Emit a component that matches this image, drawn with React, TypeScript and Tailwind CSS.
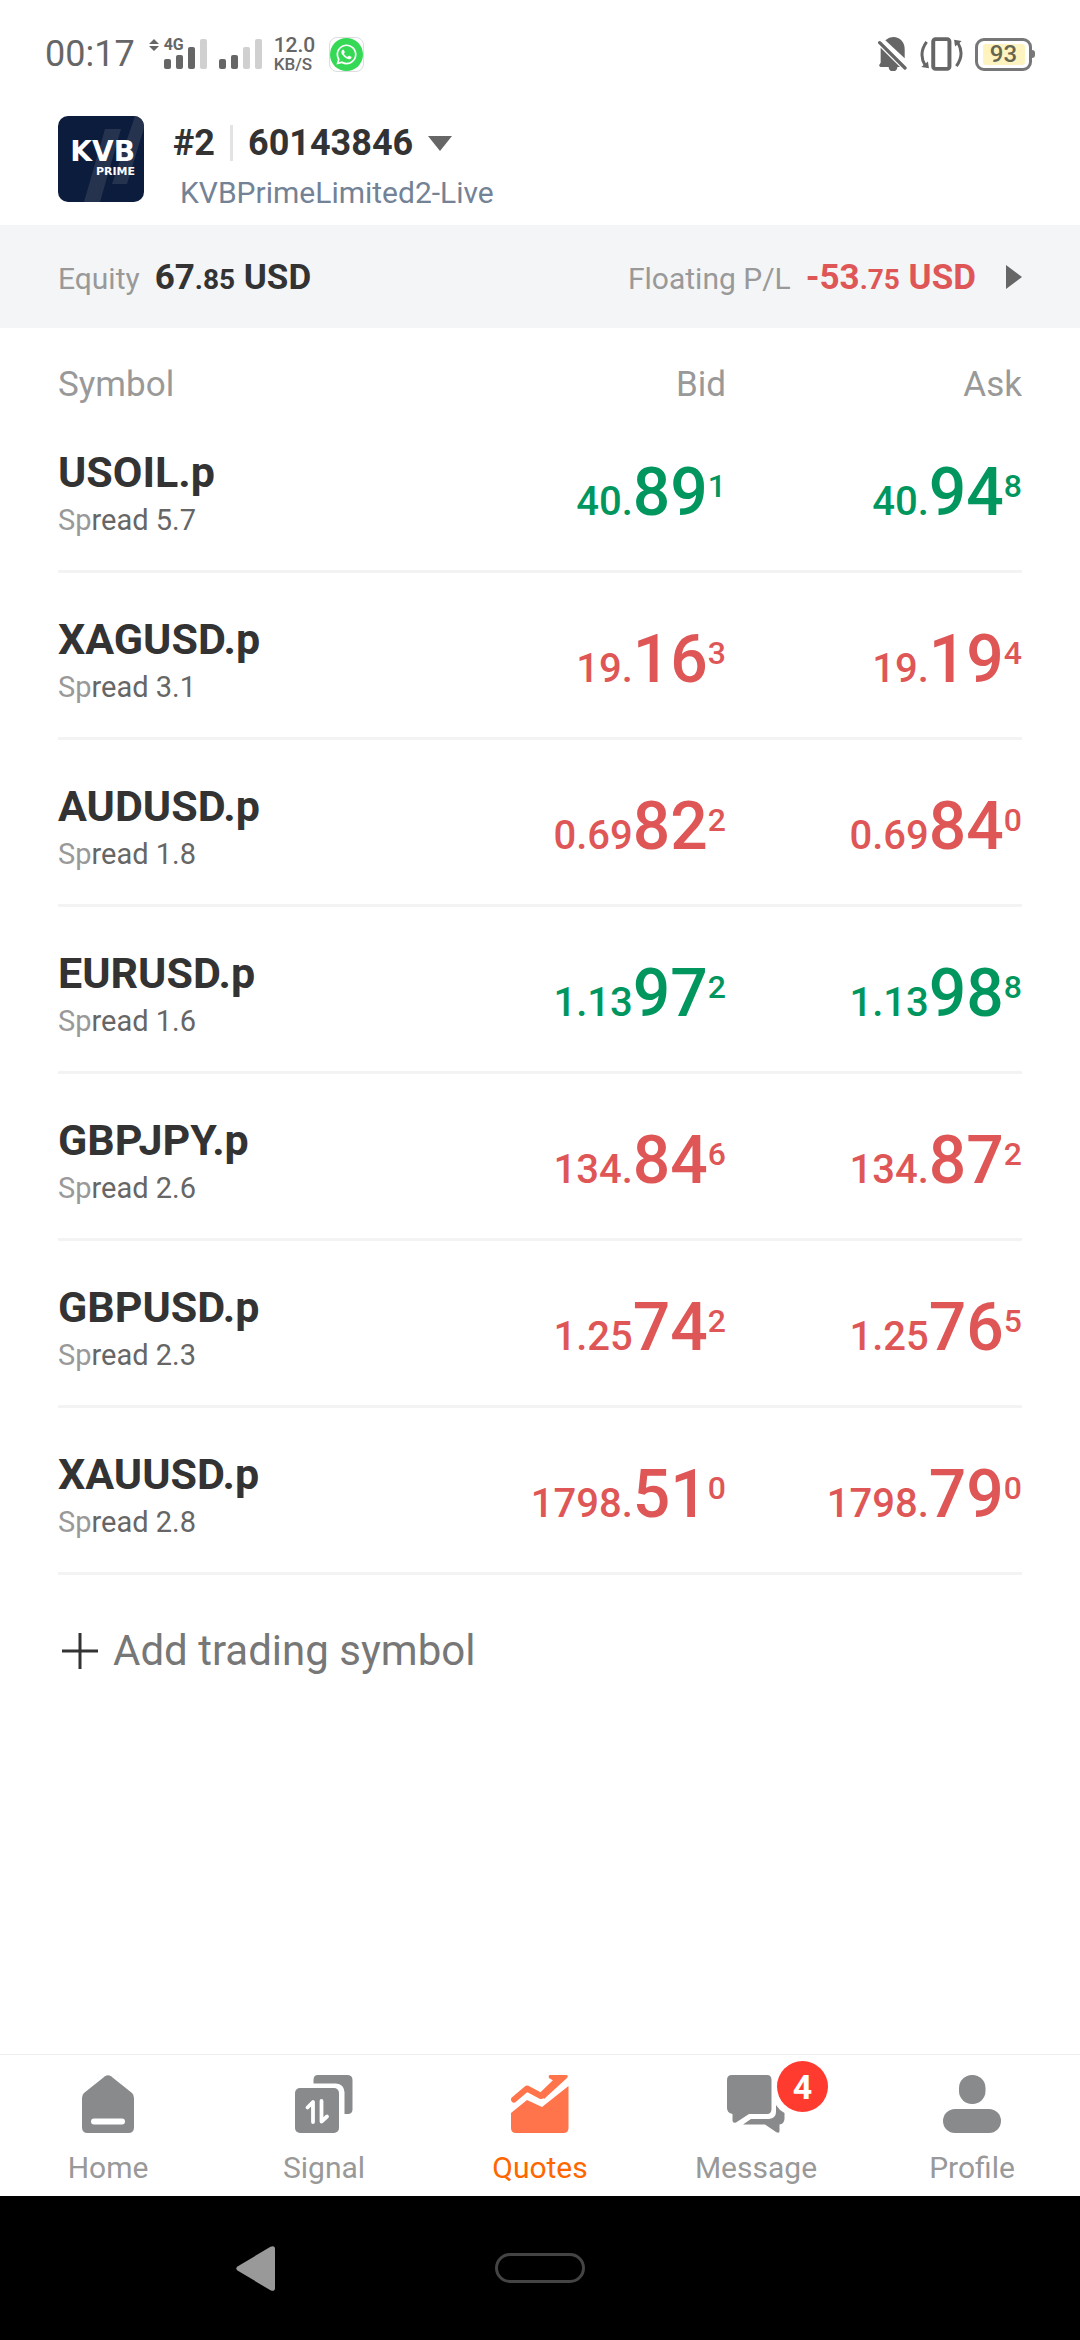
import { FaWhatsapp } from "react-icons/fa";

type Price = { small: string; big: string; sup: string };

type Quote = {
  symbol: string;
  spread: string;
  up: boolean;
  bid: Price;
  ask: Price;
};

const quotes: Quote[] = [
  { symbol: "USOIL.p", spread: "5.7", up: true, bid: { small: "40.", big: "89", sup: "1" }, ask: { small: "40.", big: "94", sup: "8" } },
  { symbol: "XAGUSD.p", spread: "3.1", up: false, bid: { small: "19.", big: "16", sup: "3" }, ask: { small: "19.", big: "19", sup: "4" } },
  { symbol: "AUDUSD.p", spread: "1.8", up: false, bid: { small: "0.69", big: "82", sup: "2" }, ask: { small: "0.69", big: "84", sup: "0" } },
  { symbol: "EURUSD.p", spread: "1.6", up: true, bid: { small: "1.13", big: "97", sup: "2" }, ask: { small: "1.13", big: "98", sup: "8" } },
  { symbol: "GBPJPY.p", spread: "2.6", up: false, bid: { small: "134.", big: "84", sup: "6" }, ask: { small: "134.", big: "87", sup: "2" } },
  { symbol: "GBPUSD.p", spread: "2.3", up: false, bid: { small: "1.25", big: "74", sup: "2" }, ask: { small: "1.25", big: "76", sup: "5" } },
  { symbol: "XAUUSD.p", spread: "2.8", up: false, bid: { small: "1798.", big: "51", sup: "0" }, ask: { small: "1798.", big: "79", sup: "0" } },
];

const HomeIcon = () => (
  <svg viewBox="0 0 58 58" className="size-[58px]" fill="currentColor">
    <path d="M26 1.3Q29-1 32 1.3L53 18Q55 20 55 23V52Q55 58 49.500 58H8.500Q3 58 3 52V23Q3 20 5 18Z" />
    <rect x="12" y="43.500" width="34" height="6" rx="3" fill="#fff" />
  </svg>
);

const SignalIcon = () => (
  <svg viewBox="0 0 58 58" className="size-[58px]" fill="currentColor">
    <path d="M18.500 8.500V5Q18.500 0 23 0H52Q57.500 0 57.500 5V35Q57 39 53 39H49.500V17Q49 9 41 8.500Z" />
    <rect y="13" width="44" height="45" rx="5" />
    <path
      d="M12.500 32.500L18 27V47M26.500 26V46.500L32 41.500"
      fill="none"
      stroke="#fff"
      strokeWidth="3.800"
      strokeLinecap="round"
      strokeLinejoin="round"
    />
  </svg>
);

const QuotesIcon = () => (
  <svg viewBox="0 0 58 58" className="size-[58px]" fill="#ff744a">
    <path d="M3 24.500L16 13.500L30 21L45 6.500" fill="none" stroke="#ff744a" strokeWidth="6" strokeLinecap="round" strokeLinejoin="round" />
    <path d="M39 0H55Q58 0 56 3L33 24L30 18L43 6L38 3Q37 0 39 0Z" />
    <path d="M0 38L16 25L31 32L57.500 11V53Q57.500 58 52.500 58H5Q0 58 0 53Z" />
  </svg>
);

const MessageIcon = () => (
  <svg viewBox="0 0 58 58" className="size-[58px]" fill="currentColor">
    <path d="M5 0H40Q44.500 0 44.500 5V34Q44.500 39 40 39H22L9 47.500Q5.500 48.500 5.500 45V39Q0 38 0 33V5Q0 0 5 0Z" />
    <path d="M49 30Q52 35 57.500 38V44Q57 49 52.500 49.500V56Q52.500 59 49 57L38 49.500H16L24 44H42Q49 43 49 37Z" />
  </svg>
);

const ProfileIcon = () => (
  <svg viewBox="0 0 58 58" className="size-[58px]" fill="currentColor">
    <rect x="16" width="26.500" height="29" rx="13" />
    <rect y="34" width="58" height="24" rx="12" />
  </svg>
);

const tabs = [
  { label: "Home", Icon: HomeIcon },
  { label: "Signal", Icon: SignalIcon },
  { label: "Quotes", Icon: QuotesIcon, active: true },
  { label: "Message", Icon: MessageIcon, badge: 4 },
  { label: "Profile", Icon: ProfileIcon },
];

const SignalBars = ({ level }: { level: number }) => (
  <svg viewBox="0 0 43 30" className="h-[30px] w-[43px]">
    {[10, 14, 22, 30].map((h, i) => (
      <rect key={h} x={i * 12} y={30 - h} width="7" height={h} rx="2" fill={i < level ? "#666" : "#d0d0d0"} />
    ))}
  </svg>
);

const StatusBar = () => (
  <div className="flex h-[108px] items-center justify-between px-[45px] text-[#666]">
    <div className="flex items-center">
      <span className="text-[36px] leading-[40px]">00:17</span>
      <div className="relative ml-[14px] flex items-end">
        <svg viewBox="0 0 10 12" className="mr-[5px] h-3 w-[10px] self-start" fill="currentColor">
          <path d="M5 0L10 5H0ZM5 12L0 7H10Z" />
        </svg>
        <span className="absolute -top-[1px] left-[15px] text-[16px] leading-[14px] font-bold">4G</span>
        <SignalBars level={3} />
      </div>
      <div className="ml-3">
        <SignalBars level={2} />
      </div>
      <div className="ml-3 flex flex-col font-medium">
        <span className="text-[21px] leading-[20px]">12.0</span>
        <span className="text-[17px] leading-[18px]">KB/S</span>
      </div>
      <span className="ml-[14px] flex size-[35px] items-center justify-center rounded-[8px] border border-[#ddd]">
        <span className="flex size-[33px] shrink-0 items-center justify-center rounded-full bg-[#35d955] text-white">
          <FaWhatsapp className="size-[23px]" />
        </span>
      </span>
    </div>
    <div className="flex items-center">
      <svg viewBox="0 0 87 102" className="h-[34px] w-[29px]" fill="currentColor">
        <path d="M22 10Q33 0 46 0C66 0 80 15 80 36V64Z" />
        <path d="M8 32L66 90H58C58 108 32 108 32 90H8Q0 88 6 80L8 77Z" />
        <path d="M5 17L81 93" stroke="currentColor" strokeWidth="10" strokeLinecap="round" />
      </svg>
      <svg viewBox="0 0 130 102" className="ml-[13px] h-[34px] w-[43px]" fill="none" stroke="currentColor">
        <rect x="40" y="6" width="49" height="90" rx="7" strokeWidth="12" />
        <path d="M20 14Q-6 50 16 86M110 88Q136 52 114 16" strokeWidth="9" />
        <path d="M4 90L24 74L27 94ZM126 12L106 28L103 8Z" fill="currentColor" stroke="none" />
      </svg>
      <div className="ml-3 flex items-center">
        <div className="flex h-[33px] w-[57px] items-center justify-center rounded-[9px] border-[3px] border-[#777]">
          <div className="flex h-[21px] w-[42px] items-center justify-center rounded-[3px] bg-[#fff4bf] text-[24px] leading-[21px] font-medium text-[#666650]">
            93
          </div>
        </div>
        <span className="h-2 w-[3px] rounded-r-full bg-[#777]" />
      </div>
    </div>
  </div>
);

const Logo = () => (
  <div className="relative flex size-[86px] shrink-0 flex-col items-end overflow-hidden rounded-[10px] bg-[#0c1c3c] pt-[22px] pr-[9px] font-['DejaVu_Sans'] text-white">
    <svg viewBox="0 0 86 86" className="absolute inset-0 size-full" fill="#26334f">
      <path d="M47 13H63L42 86H26ZM77 0H86V12L69 68H54Z" />
    </svg>
    <span className="relative text-[28px] leading-[28px] font-bold">KVB</span>
    <span className="relative text-[11px] leading-[12px] font-bold">PRIME</span>
  </div>
);

const PriceText = ({ price, up }: { price: Price; up: boolean }) => (
  <span className={`text-[66px] leading-[66px] font-medium whitespace-nowrap ${up ? "text-[#00965e]" : "text-[#df5656]"}`}>
    <span className="text-[40px] leading-none">{price.small}</span>
    {price.big}
    <span className="align-[18px] text-[32px] leading-none">{price.sup}</span>
  </span>
);

const App = () => {
  return (
    <div className="flex min-h-screen flex-col bg-white font-[Roboto,sans-serif] text-[#333]">
      <StatusBar />

      <header className="flex items-start px-[58px] pt-2 pb-[13px]">
        <Logo />
        <div className="ml-[29px] flex flex-col gap-[9px] pt-[5px]">
          <button type="button" className="flex items-center text-[36px] leading-[44px] font-bold">
            <span>#2</span>
            <span className="mx-[15px] h-9 w-[3px] bg-[#e3e3e3]" />
            <span>60143846</span>
            <svg viewBox="0 0 24 15" className="ml-[15px] h-[15px] w-6" fill="#666">
              <path d="M0 0H24L12 15Z" />
            </svg>
          </button>
          <span className="pl-[7px] text-[30px] leading-[38px] text-[#748296]">KVBPrimeLimited2-Live</span>
        </div>
      </header>

      {/* Account summary */}
      <button type="button" className="flex h-[103px] items-center justify-between bg-[#f4f5f7] px-[58px]">
        <span className="flex items-baseline gap-[15px] pt-1">
          <span className="text-[30px] text-[#999]">Equity</span>
          <span className="text-[35px] font-bold">
            67<span className="text-[28px]">.85</span> USD
          </span>
        </span>
        <span className="flex items-center gap-[30px]">
          <span className="flex items-baseline gap-[15px] pt-1">
            <span className="text-[30px] text-[#999]">Floating P/L</span>
            <span className="text-[35px] font-bold text-[#df5656]">
              -53<span className="text-[28px]">.75</span> USD
            </span>
          </span>
          <svg viewBox="0 0 16 24" className="h-6 w-4" fill="#666">
            <path d="M0 0L16 12L0 24Z" />
          </svg>
        </span>
      </button>

      <main className="flex-1 px-[58px]">
        <table className="w-full table-fixed border-separate border-spacing-0">
          <thead>
            <tr className="h-[78px] text-[35px] leading-[42px] text-[#999]">
              <th className="pt-9 text-left align-top font-normal">Symbol</th>
              <th className="pt-9 text-right align-top font-normal">Bid</th>
              <th className="w-[296px] pt-9 text-right align-top font-normal">Ask</th>
            </tr>
          </thead>
          <tbody>
            {quotes.map((quote) => (
              <tr key={quote.symbol} className="h-[167px]">
                <td className="border-b-[3px] border-[#f3f3f3] pt-[42px] align-top">
                  <div className="text-[43px] leading-[48px] font-bold">{quote.symbol}</div>
                  <div className="mt-[6px] text-[29px] leading-[36px] text-[#666]">
                    <span className="text-[#999]">Sp</span>read {quote.spread}
                  </div>
                </td>
                <td className="border-b-[3px] border-[#f3f3f3] pt-[54px] text-right align-top">
                  <PriceText price={quote.bid} up={quote.up} />
                </td>
                <td className="border-b-[3px] border-[#f3f3f3] pt-[54px] text-right align-top">
                  <PriceText price={quote.ask} up={quote.up} />
                </td>
              </tr>
            ))}
          </tbody>
        </table>

        <button type="button" className="mt-[52px] flex items-center gap-[15px] pl-1 text-[42px] leading-[48px] text-[#777]">
          <svg viewBox="0 0 36 36" className="size-9" stroke="#333" strokeWidth="3">
            <path d="M0 18H36M18 0V36" />
          </svg>
          Add trading symbol
        </button>
      </main>

      <nav className="grid h-[142px] grid-cols-5 border-t border-[#eee]">
        {tabs.map(({ label, Icon, active, badge }) => (
          <a
            key={label}
            href={`#${label.toLowerCase()}`}
            className={`flex flex-col items-center gap-[17px] pt-5 text-[30px] leading-[36px] ${active ? "text-[#ff6600]" : "text-[#999]"}`}
          >
            <span className={`relative ${active ? "" : "text-[#898a8c]"}`}>
              <Icon />
              {badge && (
                <span className="absolute -top-[14px] left-[50px] flex size-[51px] items-center justify-center rounded-full bg-[#ff3b30] text-[34px] leading-none font-bold text-white">
                  {badge}
                </span>
              )}
            </span>
            {label}
          </a>
        ))}
      </nav>

      {/* System navigation */}
      <div className="grid h-36 grid-cols-5 items-center bg-black">
        <button type="button" aria-label="Back" className="col-start-2 ml-5">
          <svg viewBox="0 0 39 45" className="h-[45px] w-[39px]" fill="#999">
            <path d="M1.500 20.500L34.500.7Q39-1 39 3V42Q39 46 34.500 44.300L1.500 24.500Q-1 22.500 1.500 20.500Z" />
          </svg>
        </button>
        <button type="button" aria-label="Home screen" className="h-[30px] w-[90px] justify-self-center rounded-full border-[3px] border-[#444]" />
      </div>
    </div>
  );
};

export default App;
